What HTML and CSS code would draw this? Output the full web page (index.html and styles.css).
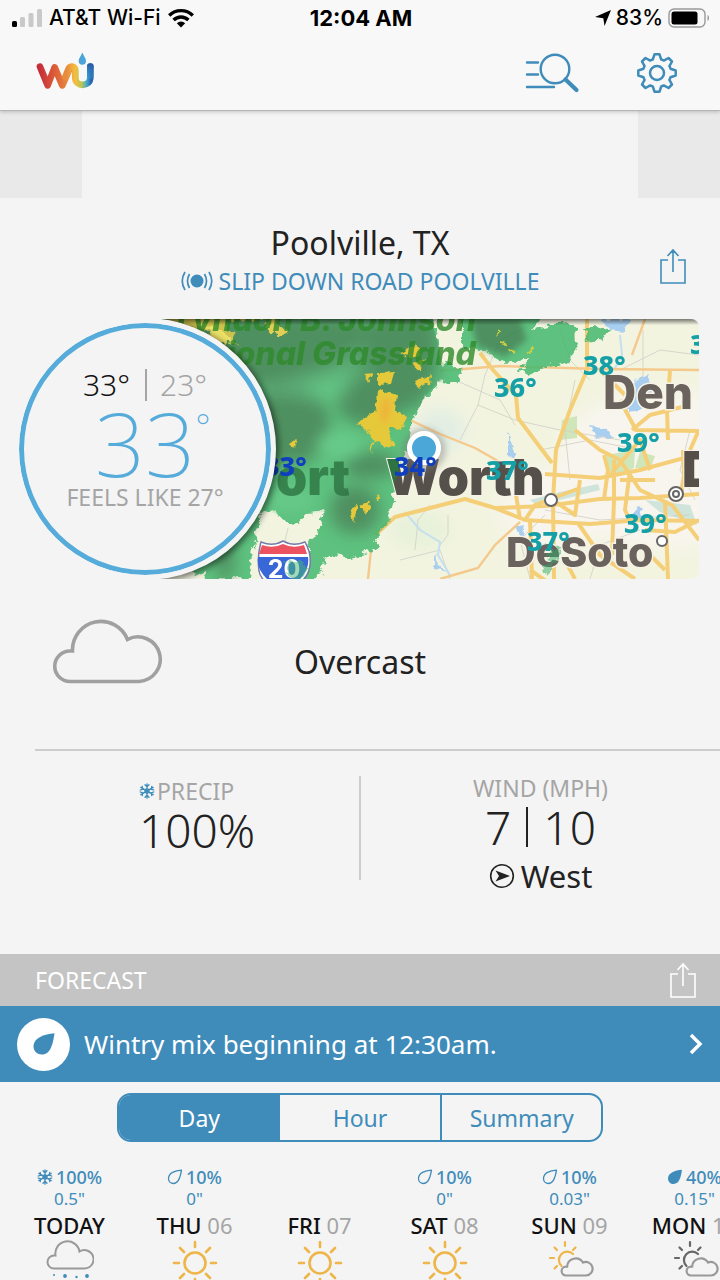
FILE: index.html
```html
<!DOCTYPE html>
<html lang="en">
<head>
<meta charset="utf-8">
<meta name="viewport" content="width=device-width, initial-scale=1">
<title>Poolville, TX weather</title>
<link rel="stylesheet" href="styles.css">
</head>
<body>
<svg class="defs" aria-hidden="true">
  <symbol id="share" viewBox="0 0 28 37"><path d="M9 12H2v23h24V12h-7M14 24V3M8.500 8 14 2l5.500 6" fill="none" stroke="currentColor" stroke-width="1.600"/></symbol>
  <symbol id="flake" viewBox="0 0 16 16"><g fill="none" stroke="currentColor" stroke-width="1.300" stroke-linecap="round"><path d="M8 .8v14.400M1.800 4.400l12.400 7.200M1.800 11.600l12.400-7.200M6 1.800l2 2 2-2M6 14.200l2-2 2 2M1.200 7l2.600-.8L3.200 3.500M14.800 9l-2.600.8.6 2.700M1.200 9l2.600.8-.6 2.700M14.800 7l-2.600-.8.6-2.700"/><circle cx="8" cy="8" r="2"/></g></symbol>
  <symbol id="drop" viewBox="0 0 16 16"><path d="M14.500 1.200C8 1.500 1.500 4 1.500 9.500c0 3 2.200 5 5 5 5.500 0 7-7 8-13.300z" fill="none" stroke="currentColor" stroke-width="1.300" stroke-linejoin="round"/></symbol>
  <symbol id="drop-full" viewBox="0 0 16 16"><path d="M15 .8C8 1.200 1 4 1 9.500 1 13 3.500 15 6.500 15 12.500 15 14 7.500 15 .8z" fill="currentColor"/></symbol>
  <symbol id="cloud" viewBox="0 0 112 69"><path d="M18 66.500h69a22.300 22.300 0 1 0-11.500-42A28.500 28.500 0 0 0 20.500 36h-2.500a15.200 15.200 0 0 0 0 30.500z" fill="none" stroke="currentColor" stroke-width="3.600"/></symbol>
  <symbol id="sun" viewBox="0 0 48 48"><g fill="none" stroke="#eeb549" stroke-width="2.600" stroke-linecap="round"><circle cx="24" cy="24" r="10.500"/><path d="M24 3v5M24 40v5M3 24h5M40 24h5M9 9l4 4M35 35l4 4M39 9l-4 4M13 35l-4 4"/></g></symbol>
  <symbol id="part-cloud" viewBox="0 0 48 48">
    <path d="M15.500 27A8 8 0 1 1 27 15M19 3v4M4 19h4M8.500 8.500l2.500 2.500M29.500 8.500 27 11M8.500 29.500 11 27" fill="none" stroke="currentColor" stroke-width="2.200" stroke-linecap="round"/>
    <path d="M20 36.500h20a6.800 6.800 0 1 0-3-13 8.600 8.600 0 0 0-15.900 4.200H20a4.400 4.400 0 0 0 0 8.800z" fill="none" stroke="#999" stroke-width="2.200"/>
  </symbol>
  <symbol id="sleet" viewBox="0 0 48 48">
    <path d="M8 29.500h30.500a9.200 9.200 0 1 0-5-17A11.800 11.800 0 0 0 9.500 16.500H8a6.500 6.500 0 0 0 0 13z" fill="none" stroke="#999" stroke-width="2"/>
    <g fill="#3f8cba"><circle cx="8" cy="36" r="1"/><circle cx="19" cy="37" r="1.900"/><circle cx="30.500" cy="38" r="1.200"/><circle cx="41" cy="37" r="1.900"/><circle cx="14" cy="43" r="1.500"/><circle cx="34" cy="43" r="1.500"/></g>
  </symbol>
</svg>

<div class="app">
  <header class="top">
    <div class="status">
      <div class="carrier">
        <svg class="signal" viewBox="0 0 30 20"><rect x="0" y="13" width="5" height="6" rx="1.500"/><g fill="#c9c9c9"><rect x="8" y="9" width="5" height="10" rx="1.500"/><rect x="16.500" y="5" width="5" height="14" rx="1.500"/><rect x="25" y="1" width="5" height="18" rx="1.500"/></g></svg>
        <span>AT&amp;T Wi-Fi</span>
        <svg class="wifi" viewBox="0 0 26 20"><g fill="none" stroke="#000" stroke-width="3.400"><path d="M1.200 7.500a16.800 16.800 0 0 1 23.600 0"/><path d="M5.600 12a10.500 10.500 0 0 1 14.800 0"/></g><path d="M13 19.500 8.800 15.200a6 6 0 0 1 8.400 0z"/></svg>
      </div>
      <time class="clock">12:04 AM</time>
      <div class="power">
        <svg class="locate" viewBox="0 0 16 16"><path d="M16 0 9.500 16 8.300 8.200 0 7z"/></svg>
        <span>83%</span>
        <svg class="battery" viewBox="0 0 42 20"><rect x="1" y="1" width="36" height="18" rx="5" fill="none" stroke="#999" stroke-width="1.400"/><rect x="3.500" y="3.500" width="26" height="13" rx="2.500"/><path d="M39.500 7v6c2-1 2-5 0-6z" fill="#999"/></svg>
      </div>
    </div>
    <nav class="nav" aria-label="Main">
      <a class="logo" href="#" aria-label="Weather Underground">
        <svg viewBox="0 12 180 120">
          <defs>
            <linearGradient id="w" x1="0" x2="1"><stop offset="0" stop-color="#c62f3a"/><stop offset=".5" stop-color="#dc5b38"/><stop offset="1" stop-color="#e98b3d"/></linearGradient>
            <linearGradient id="u" gradientUnits="userSpaceOnUse" x1="95" y1="60" x2="168" y2="60"><stop offset="0" stop-color="#e98b3d"/><stop offset=".35" stop-color="#f3bf3f"/><stop offset=".62" stop-color="#b9c556"/><stop offset=".85" stop-color="#38a3d4"/><stop offset="1" stop-color="#2d62ad"/></linearGradient>
            <linearGradient id="r" x1="0" y1="0" x2="0" y2="1"><stop offset="0" stop-color="#2b55a3"/><stop offset="1" stop-color="#35a0d3" stop-opacity=".3"/></linearGradient>
          </defs>
          <g fill="none" stroke-width="20" stroke-linecap="round" stroke-linejoin="round"><path d="M15 53 38 109 59 55 82 109 101 66" stroke="url(#w)"/><path d="M91 84 99 64C104 48 121 50 121 66V86C121 114 166 116 166 84V53" stroke="url(#u)"/></g>
          <path d="M156 53a10 10 0 0 1 20 0v36h-20z" fill="url(#r)"/>
          <path d="M142 9c3 12 11 18 11 27a11 11 0 0 1-22 0c0-9 8-15 11-27z" fill="#4ba5d8"/>
        </svg>
      </a>
      <div class="tools">
        <button type="button" class="tool" aria-label="Search"><svg class="search" viewBox="0 0 56 42"><g fill="none" stroke="currentColor" stroke-linecap="round"><path d="M3 10.500h11M3 22.500h11M3 35h27" stroke-width="2.400"/><circle cx="31" cy="17" r="14.300" stroke-width="2.400"/><path d="m41.500 27.500 11 10.500" stroke-width="4.200"/></g></svg></button>
        <button type="button" class="tool" aria-label="Settings"><svg class="gear" viewBox="-21 -21 42 42"><g fill="none" stroke="currentColor" stroke-width="2.500" stroke-linejoin="round"><circle r="7"/><path d="M-2.500-18.700H2.500L4.200-13.500Q5.500-13.200 6.800-12.400L11.500-15 15-11.500 12.400-6.800Q13.200-5.500 13.500-4.200L18.700-2.500V2.500L13.500 4.200Q13.200 5.500 12.400 6.800L15 11.500 11.500 15 6.800 12.400Q5.500 13.200 4.200 13.500L2.500 18.700H-2.500L-4.200 13.500Q-5.500 13.200-6.800 12.400L-11.500 15-15 11.500-12.400 6.800Q-13.200 5.500-13.500 4.200L-18.700 2.500V-2.500L-13.500-4.200Q-13.200-5.500-12.400-6.800L-15-11.500-11.500-15-6.800-12.400Q-5.500-13.200-4.200-13.500z"/></g></svg></button>
      </div>
    </nav>
  </header>

  <main>
    <div class="banner"><div class="banner-slot"></div></div>

    <section class="place">
      <div class="place-names">
        <h1>Poolville, TX</h1>
        <a class="station" href="#"><svg class="beacon" viewBox="0 0 32 20"><circle cx="16" cy="10" r="6.500" fill="currentColor"/><path d="M8.500 3q-4 7 0 14M4 1q-5.500 9 0 18M23.500 3q4 7 0 14M28 1q5.500 9 0 18" fill="none" stroke="currentColor" stroke-width="1.700"/></svg>SLIP DOWN ROAD POOLVILLE</a>
      </div>
      <button type="button" class="share" aria-label="Share conditions"><svg><use href="#share"/></svg></button>
    </section>

    <section class="radar">
      <svg class="map" viewBox="145 319 554 260" preserveAspectRatio="xMinYMid slice" role="img" aria-label="Radar map">
        <defs>
          <filter id="rag" x="-5%" y="-5%" width="110%" height="110%" color-interpolation-filters="sRGB"><feTurbulence type="fractalNoise" baseFrequency=".11" numOctaves="3" seed="4"/><feDisplacementMap in="SourceGraphic" scale="14" xChannelSelector="R" yChannelSelector="G"/></filter>
          <filter id="rough" x="-5%" y="-5%" width="110%" height="110%" color-interpolation-filters="sRGB"><feTurbulence type="fractalNoise" baseFrequency=".16" numOctaves="2" seed="9"/><feDisplacementMap in="SourceGraphic" scale="7" xChannelSelector="R" yChannelSelector="G"/><feGaussianBlur stdDeviation=".6"/></filter>
          <filter id="soft" x="-20%" y="-20%" width="140%" height="140%"><feGaussianBlur stdDeviation="8"/></filter>
          <filter id="dim" x="-50%" y="-50%" width="200%" height="200%"><feGaussianBlur stdDeviation="3"/></filter>
          <linearGradient id="topshade" x1="0" y1="0" x2="0" y2="1"><stop offset="0" stop-color="#000" stop-opacity=".5"/><stop offset="1" stop-color="#000" stop-opacity="0"/></linearGradient>
          <linearGradient id="worth" gradientUnits="userSpaceOnUse" x1="385" y1="470" x2="412" y2="480"><stop offset="0" stop-color="#2d7442"/><stop offset=".4" stop-color="#2d7442"/><stop offset=".5" stop-color="#56504b"/></linearGradient>
          <clipPath id="rain"><path id="rainshape" d="M140 310H432L434 330 440 350 442 362 462 372 455 384 438 382 424 398 411 425 412 445 400 462 394 480 396 500 388 512 391 522 378 535 374 552 350 558 332 556 322 566 316 580H306V548L318 532 324 512 306 514 298 524 285 520 268 510 259 518 256 540 252 552 246 580H212L190 570V400z"/></clipPath>
        </defs>
        <rect x="145" y="319" width="554" height="260" fill="#f2f4e0"/>
        <g filter="url(#soft)"><ellipse cx="660" cy="470" rx="105" ry="80" fill="#f8f5ee"/><ellipse cx="555" cy="510" rx="55" ry="40" fill="#f8f5ee"/><ellipse cx="440" cy="430" rx="25" ry="22" fill="#e2eee3"/><ellipse cx="420" cy="530" rx="30" ry="18" fill="#e7f1da"/></g>
        <g fill="#cfe6bb"><path d="M562 420 577 416V438L560 440z"/><path d="M606 455 635 450 634 468 618 476 608 470z"/><path d="M640 452 655 456 650 470 635 468z"/></g>
        <g fill="#cfe4da"><path d="M530 500 560 492 598 484 600 490 560 500 535 504z"/><path d="M645 500 690 505 697 525 660 512z"/></g>
        <g fill="#a9cff0" filter="url(#rough)"><path d="M600 319H630L625 332 610 330z"/><path d="M628 385 648 375 652 395 640 410 628 412z"/><path d="M590 425 605 428 616 440 596 437z"/><path d="M508 432 512 445 515 458 508 455z"/><path d="M640 505 642 520 628 525 634 510z"/><path d="M515 528 525 526 522 538z"/><path d="M434 552 438 565 446 572 434 568z"/></g>
        <g fill="none" stroke="#cfcfc5" stroke-width=".8"><path d="M478 405 485 375 500 340 530 325M478 405 515 420 560 430 620 440M478 405 460 440M455 380 500 400 515 425M415 550 418 520 430 505M400 560 440 550 450 579M448 515V535L440 545M540 450 590 440 640 450M560 330 570 360 590 380M643 330V380M690 430 680 470 695 500M545 510 600 520 690 515M575 380 565 430 570 480M620 370 660 350 699 355M590 579 600 545 640 530M530 579 520 540 545 515M288 528 284 545"/></g>
        <path d="M405 512 420 530 440 542 438 555 450 575M620 335 622 355 614 370" fill="none" stroke="#c4dff0" stroke-width="2"/>
        <g fill="none" stroke="#f5c98c" stroke-width="2.400"><path d="M410 420 440 434 475 448 505 465M440 371 500 366 600 369 699 370M645 319 632 355M440 579 478 568 495 545 520 522M368 579 371 550"/></g>
        <g fill="none" stroke="#f5cf78" stroke-width="4" stroke-linejoin="round"><path d="M375 535 395 517 430 508 465 499 495 508 545 506 600 499 640 498 699 494"/><path d="M587 319V370L570 410 556 450 553 500 554 579"/><path d="M480 353 493 370 516 395 518 418 552 463"/><path d="M545 474 600 478 640 470 699 454"/><path d="M495 508 525 520 590 524 640 520 699 521"/><path d="M575 430 600 450 620 460 640 490 672 505 699 540"/><path d="M604 499 608 470 604 455M614 460V500L612 555"/><path d="M670 371 667 410 668 440M632 430 650 415 690 405M620 400 636 430 699 431"/><path d="M680 500 684 475 683 450M690 450 699 430M665 500 668 579"/><path d="M516 495 520 519M532 579 530 520M525 520 535 505 580 488M553 500 575 515 580 480"/><path d="M610 475 640 440 650 470M620 480 655 480M630 470 625 510 630 521"/><path d="M578 523 600 555 635 579M645 530 675 532 699 520M565 560 575 579M600 370 625 395"/><path d="M530 570 552 585M640 545 665 570"/></g>

        <g opacity=".86">
          <use href="#rainshape" fill="#46b96f" filter="url(#rag)"/>
          <g clip-path="url(#rain)"><g filter="url(#soft)" fill="#347f4b"><ellipse cx="265" cy="350" rx="95" ry="38"/><ellipse cx="290" cy="425" rx="40" ry="40"/><ellipse cx="405" cy="350" rx="34" ry="60"/><ellipse cx="370" cy="400" rx="34" ry="26"/><ellipse cx="355" cy="510" rx="25" ry="24"/><ellipse cx="370" cy="465" rx="28" ry="14"/><ellipse cx="225" cy="560" rx="9" ry="22"/><ellipse cx="325" cy="345" rx="70" ry="30"/></g>
          <g filter="url(#soft)" fill="#53c47e"><ellipse cx="340" cy="445" rx="23" ry="12"/><ellipse cx="290" cy="500" rx="26" ry="9"/><path d="M250 390 330 365 370 340 345 400 310 400z" opacity=".45"/></g></g>
          <g filter="url(#rag)" fill="#46b96f"><path d="M462 315H542L530 330 555 325 575 322 576 345 570 362 545 368 530 375 518 372 530 358 505 362 485 352 462 347z"/><path d="M582 328 595 328 608 332 602 342 588 340z"/></g>
          <path d="M470 319H520L527 340 505 357 477 346z" fill="#347f4b" filter="url(#dim)"/>
          <g filter="url(#rag)"><path d="M150 315H275L278 326 260 320 225 323 238 345 210 335 190 330z" fill="#c9ba36"/><path d="M272 319 288 334 280 337 264 326z" fill="#dfc93e"/><path d="M200 325 225 330 232 345 212 340z" fill="#e9dc52"/></g>
        </g>
        <g filter="url(#rough)" fill="#e5c93a"><path d="M380 390 397 395 395 410 407 417 401 430 389 427 391 447 372 440 368 430 356 424 374 412z"/><path d="M378 373 394 372 391 384 378 385zM364 374 373 373 368 382zM400 353 418 344 420 355 413 359zM414 380 431 374 430 384 418 388zM412 365 424 358 420 372zM350 507 358 505 354 523zM360 506 370 502 366 515zM375 496 380 493 378 500zM369 447 376 438 371 452zM290 443 296 439 293 448zM388 440 395 443 393 448z"/></g>
        <g fill="none" stroke="#d3d03f" stroke-width="2" filter="url(#rough)"><path d="M497 329 500 332 497 336M501 341 505 343 504 346M509 350 515 352M526 353 532 350 530 354"/></g>
        <path d="M384 398 391 400 389 418 382 425 380 410z" fill="#efb33a" filter="url(#dim)"/>

        <g class="park"><text x="476" y="331">Lyndon B. Johnson</text><text x="476" y="365">National Grassland</text></g>
        <text class="city wet" x="276" y="495">ort</text><text class="city" x="386" y="495" fill="url(#worth)">Worth</text>
        <text class="town" x="603" y="409">Den</text><text class="city" x="682" y="487">D</text><text class="suburb" x="506" y="567">DeSoto</text>
        <path d="M545 540 552 552 558 545 560 560 550 565 548 579 543 572 549 560z" fill="#2fa866" opacity=".5" filter="url(#rag)"/>
        <g stroke="#666" stroke-width="2" fill="#fff"><circle cx="551" cy="500" r="6"/><circle cx="662" cy="541" r="5"/><circle cx="676" cy="494" r="7"/><circle cx="676" cy="494" r="3"/></g>

        <g><path d="M261 542q12 5 22-1 10 6 22 1 8 14 4 28-2 10-25 25-23-12-25-24-2-15 2-29z" fill="#fff" stroke="#777baa" stroke-width="1.500"/><path d="M262 545q11 4 21-1 10 5 21 1l3 9h-48z" fill="#ed5260"/><path d="M258 557h50q3 18-24 35-29-17-26-35z" fill="#3867d8"/><text class="shield" x="284" y="578">20</text><path d="M284 558 303 560 308 575 296 580 286 572 288 564z" fill="#46b96f" opacity=".5" filter="url(#rag)"/></g>

        <circle cx="424" cy="450" r="22" fill="#777" opacity=".4" filter="url(#dim)"/><circle cx="424" cy="448" r="14.500" fill="#4ba7d8" stroke="#fff" stroke-width="5"/>
        <g class="cold"><text x="396" y="318">32°</text><text x="264" y="476">33°</text><text x="394" y="476">34°</text></g>
        <g class="mild"><text x="494" y="397">36°</text><text x="583" y="375">38°</text><text x="617" y="452">39°</text><text x="486" y="480">37°</text><text x="624" y="533">39°</text><text x="527" y="551">37°</text><text x="690" y="354">38°</text></g>
        <rect x="145" y="319" width="554" height="6" fill="url(#topshade)"/>
        <circle cx="147" cy="451" r="132" opacity=".5" filter="url(#dim)"/>
      </svg>
      <div class="dial">
        <p class="range"><span class="high">33°</span><span class="low">23°</span></p>
        <p class="now">33<span class="degree">°</span></p>
        <p class="feels">FEELS LIKE 27°</p>
      </div>
    </section>

    <section class="sky">
      <svg class="sky-icon"><use href="#cloud"/></svg>
      <p>Overcast</p>
    </section>

    <section class="stats">
      <div class="stat precip">
        <h2><svg class="mini"><use href="#flake"/></svg>PRECIP</h2>
        <p class="figure">100%</p>
      </div>
      <div class="stat wind">
        <h2>WIND (MPH)</h2>
        <p class="figure pair"><span>7</span><span class="bar"></span><span>10</span></p>
        <p class="heading"><svg class="compass" viewBox="0 0 26 26"><circle cx="13" cy="13" r="11.300" fill="none" stroke="currentColor" stroke-width="1.600"/><path d="M6.500 7.500 21 13 6.500 18.500 10 13z" fill="currentColor"/></svg>West</p>
      </div>
    </section>

    <section class="forecast">
      <div class="forecast-bar">
        <h2>FORECAST</h2>
        <button type="button" class="share light" aria-label="Share forecast"><svg><use href="#share"/></svg></button>
      </div>
      <a class="alert" href="#">
        <span class="alert-badge"><svg><use href="#drop-full"/></svg></span>
        <span class="alert-text">Wintry mix beginning at 12:30am.</span>
        <svg class="chevron" viewBox="0 0 14 22"><path d="m2 2 9 9-9 9" fill="none" stroke="currentColor" stroke-width="3.400"/></svg>
      </a>
      <div class="tabs">
        <button type="button" class="tab on" aria-pressed="true">Day</button>
        <button type="button" class="tab" aria-pressed="false">Hour</button>
        <button type="button" class="tab" aria-pressed="false">Summary</button>
      </div>
      <ol class="days">
        <li><p class="chance"><svg class="mini"><use href="#flake"/></svg>100%</p><p class="amount">0.5"</p><p class="date">TODAY</p><svg class="day-icon"><use href="#sleet"/></svg></li>
        <li><p class="chance"><svg class="mini"><use href="#drop"/></svg>10%</p><p class="amount">0"</p><p class="date">THU <span>06</span></p><svg class="day-icon"><use href="#sun"/></svg></li>
        <li><p class="chance"></p><p class="amount"></p><p class="date">FRI <span>07</span></p><svg class="day-icon"><use href="#sun"/></svg></li>
        <li><p class="chance"><svg class="mini"><use href="#drop"/></svg>10%</p><p class="amount">0"</p><p class="date">SAT <span>08</span></p><svg class="day-icon"><use href="#sun"/></svg></li>
        <li><p class="chance"><svg class="mini"><use href="#drop"/></svg>10%</p><p class="amount">0.03"</p><p class="date">SUN <span>09</span></p><svg class="day-icon gold"><use href="#part-cloud"/></svg></li>
        <li><p class="chance"><svg class="mini"><use href="#drop-full"/></svg>40%</p><p class="amount">0.15"</p><p class="date">MON <span>10</span></p><svg class="day-icon dark"><use href="#part-cloud"/></svg></li>
      </ol>
    </section>
  </main>
</div>
</body>
</html>
```

FILE: styles.css
```css
:root {
  --blue: #3f8cba;
  --sky: #55abd9;
  --ink: #222;
  --grey: #a5a5a5;
  --page: #f4f4f4;
}

* { box-sizing: border-box; }

body {
  margin: 0;
  background: var(--page);
  color: var(--ink);
  font-family: "Noto Sans", "Open Sans", sans-serif;
}

h1, h2, p, ol { margin: 0; padding: 0; font-weight: 400; }
ol { list-style: none; }
a { color: inherit; text-decoration: none; }
svg { display: block; flex: none; }
button { margin: 0; padding: 0; border: 0; background: none; color: inherit; font: inherit; cursor: pointer; }

.defs { position: absolute; width: 0; height: 0; }
.app { height: 100vh; overflow: hidden; }

/* Top bar */
.top {
  position: relative;
  background: #f8f8f8;
  border-bottom: 1px solid #b5b5b5;
  box-shadow: 0 1px 4px rgba(0, 0, 0, .2);
}
.status {
  display: grid;
  grid-template-columns: 1fr auto 1fr;
  align-items: center;
  height: 36px;
  padding: 0 10px 0 12px;
  color: #000;
  font: 500 21px/24px Inter, sans-serif;
}
.carrier, .power { display: flex; align-items: center; gap: 7px; }
.power { justify-content: flex-end; gap: 5px; }
.clock { font-size: 22px; font-weight: 700; }
.signal { width: 30px; height: 20px; }
.wifi { width: 26px; height: 20px; }
.locate { width: 16px; height: 16px; }
.battery { width: 42px; height: 20px; }
.nav {
  display: flex;
  align-items: center;
  justify-content: space-between;
  height: 74px;
  padding: 0 42px 0 35px;
}
.logo svg { width: 60px; height: 40px; }
.tools { display: flex; align-items: center; gap: 56px; color: var(--blue); }
.search { width: 56px; height: 42px; }
.gear { width: 42px; height: 42px; }

/* Banner */
.banner { padding: 0 82px; background: #e9e9e9; }
.banner-slot { height: 87px; background: var(--page); }

/* Location */
.place { position: relative; padding: 25px 70px 0; }
.place-names { display: flex; flex-direction: column; align-items: center; }
h1 { font-size: 32px; line-height: 40px; }
.station {
  display: flex;
  align-items: center;
  gap: 6px;
  color: var(--blue);
  font-size: 23px;
  line-height: 36px;
}
.beacon { width: 32px; height: 20px; }
.share { color: var(--blue); }
.share svg { width: 28px; height: 37px; }
.place .share { position: absolute; top: 50px; right: 33px; }

/* Radar card: the map starts under the centre of the dial */
.radar { position: relative; margin: 20px 21px 0 20px; padding-left: 125px; }
.map { width: 100%; height: 260px; border-radius: 0 8px 8px 0; }
.dial {
  position: absolute;
  top: -1px;
  left: -6px;
  display: flex;
  flex-direction: column;
  align-items: center;
  width: 262px;
  height: 262px;
  padding-top: 46px;
  border: 5px solid var(--page);
  border-radius: 50%;
  background: var(--page);
  box-shadow: inset 0 0 0 5px var(--sky);
}
.range { display: flex; font-size: 30px; line-height: 32px; font-weight: 300; }
.high { padding-right: 15px; border-right: 2px solid var(--grey); color: #111; }
.low { padding-left: 13px; color: var(--grey); }
.now { position: relative; color: var(--sky); font-size: 88px; line-height: 84px; font-weight: 200; }
.degree { position: absolute; top: -4px; left: 100%; font-size: 36px; line-height: 60px; }
.feels { color: var(--grey); font-size: 23px; line-height: 24px; }

/* Sky condition */
.sky {
  display: grid;
  grid-template-columns: 1fr auto 1fr;
  align-items: center;
  padding: 36px 52px 65px;
}
.sky-icon { width: 112px; height: 69px; color: #a0a0a0; }
.sky p { margin-top: 24px; font-size: 32px; line-height: 40px; }

/* Precipitation and wind */
.stats {
  display: grid;
  grid-template-columns: 326fr 359fr;
  margin-left: 35px;
  padding: 25px 0 74px;
  border-top: 2px solid #ccc;
}
.stat { display: grid; align-content: start; justify-content: center; height: 104px; }
.precip { justify-items: start; padding-top: 3px; border-right: 2px solid #ccc; }
.wind { justify-items: center; }
.stat h2 {
  display: flex;
  align-items: center;
  gap: 2px;
  color: var(--grey);
  font-size: 23px;
  line-height: 24px;
}
.mini { width: 16px; height: 16px; color: var(--blue); }
.figure { font-size: 46px; line-height: 54px; font-weight: 300; }
.pair { display: flex; align-items: center; gap: 15px; }
.bar { width: 2px; height: 40px; background: var(--ink); }
.heading { display: flex; align-items: center; gap: 6px; font-size: 31px; line-height: 44px; }
.compass { width: 26px; height: 26px; }

/* Forecast */
.forecast-bar {
  display: flex;
  align-items: center;
  justify-content: space-between;
  height: 52px;
  padding: 0 23px 0 35px;
  background: #c4c4c4;
  color: #fff;
}
.forecast-bar h2 { font-size: 23px; line-height: 30px; }
.light { color: #fff; }
.alert {
  display: flex;
  align-items: center;
  gap: 14px;
  height: 76px;
  padding: 0 17px;
  background: var(--blue);
  color: #fff;
}
.alert-badge {
  display: grid;
  place-items: center;
  width: 53px;
  height: 53px;
  border-radius: 50%;
  background: #fff;
  color: var(--blue);
}
.alert-badge svg { width: 24px; height: 24px; }
.alert-text { flex: 1; font-size: 26px; line-height: 36px; }
.chevron { width: 14px; height: 22px; }
.tabs {
  display: grid;
  grid-template-columns: repeat(3, 1fr);
  height: 49px;
  margin: 11px 117px 24px;
  overflow: hidden;
  border: 2px solid var(--blue);
  border-radius: 14px;
  color: var(--blue);
  font-size: 23px;
}
.tab + .tab { border-left: 2px solid var(--blue); }
.tab.on + .tab { border-left: 0; }
.tab.on { background: var(--blue); color: #fff; }
.days { display: grid; grid-auto-flow: column; grid-auto-columns: 125px; margin-left: 7px; }
.days li { display: flex; flex-direction: column; align-items: center; }
.chance, .amount { min-height: 22px; color: var(--blue); font-size: 18px; line-height: 22px; }
.chance { display: flex; align-items: center; gap: 3px; font-weight: 500; }
.amount { font-size: 17px; }
.date { color: #111; font-size: 22px; line-height: 30px; font-weight: 500; white-space: nowrap; }
.date span { color: var(--grey); font-weight: 400; }
.day-icon { width: 48px; height: 48px; margin-top: -1px; }
.gold { color: #eeb549; }
.dark { color: #666; }

/* Map lettering */
.city { stroke: #f6f2e6; stroke-width: 2px; paint-order: stroke; font: 900 50px Inter, sans-serif; }
.city:not([fill]) { fill: #56504b; }
.city.wet { fill: #2d7442; stroke: none; opacity: .8; }
.town { fill: #69625d; stroke: #f6f2e6; stroke-width: 3px; paint-order: stroke; font: 800 46px Inter, sans-serif; }
.suburb { fill: #69625d; stroke: #f6f2e6; stroke-width: 3px; paint-order: stroke; font: 800 41px Inter, sans-serif; }
.park { fill: #2f8a2b; opacity: .8; font: italic 800 32px Inter, sans-serif; text-anchor: end; }
.shield { fill: #fff; font: 700 25px Inter, sans-serif; text-anchor: middle; }
.cold, .mild { fill: #0f3fbf; font: 800 27px "Noto Sans", sans-serif; }
.mild { fill: #14a0a6; }
```
